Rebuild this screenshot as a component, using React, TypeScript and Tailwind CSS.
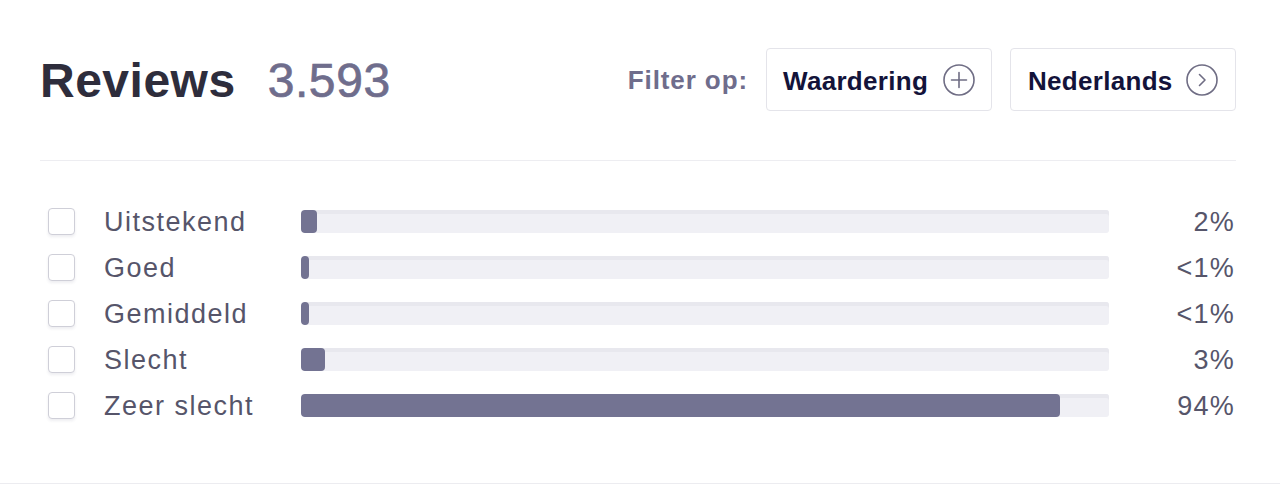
import React from "react";

const rows = [
  { label: "Uitstekend", pct: "2%", w: 16 },
  { label: "Goed", pct: "<1%", w: 8 },
  { label: "Gemiddeld", pct: "<1%", w: 8 },
  { label: "Slecht", pct: "3%", w: 24 },
  { label: "Zeer slecht", pct: "94%", w: 759 },
];

export default function App() {
  return (
    <div
      className="w-[1280px] h-[484px] bg-white border-b border-[#ececf0]"
      style={{ fontFamily: '"Liberation Sans", Arial, sans-serif' }}
    >
      <div className="pl-[40px] pr-[44px] pt-[48px]">
        <div className="flex items-center justify-between h-[63px]">
          <div className="flex items-center pt-[2px]">
            <span className="text-[48px] leading-[48px] font-bold text-[#2e2d3c] tracking-[0.5px]">
              Reviews
            </span>
            <span className="ml-[32px] text-[48px] leading-[48px] text-[#6f6d8c] tracking-[0.6px] [-webkit-text-stroke:0.7px_#6f6d8c]">
              3.593
            </span>
          </div>
          <div className="flex items-center">
            <span className="pt-[2px] text-[26px] font-bold text-[#6f6d8c] tracking-[0.9px] mr-[18px]">
              Filter op:
            </span>
            <button className="h-[63px] w-[226px] flex items-center pl-[16px] pr-[16px] border border-[#e4e4ea] rounded-[4px] bg-white">
              <span className="pt-[3px] text-[26px] font-bold text-[#13133a] tracking-[0.3px]">
                Waardering
              </span>
              <svg className="ml-auto" width="32" height="32" viewBox="0 0 32 32" fill="none">
                <circle cx="16" cy="16" r="15" stroke="#6f6d84" strokeWidth="1.6" />
                <path d="M16 8.5V23.5M8.5 16H23.5" stroke="#6f6d84" strokeWidth="1.6" strokeLinecap="round" />
              </svg>
            </button>
            <button className="ml-[18px] h-[63px] w-[226px] flex items-center pl-[17px] pr-[17px] border border-[#e4e4ea] rounded-[4px] bg-white">
              <span className="pt-[3px] text-[26px] font-bold text-[#13133a] tracking-[0.3px]">
                Nederlands
              </span>
              <svg className="ml-auto" width="32" height="32" viewBox="0 0 32 32" fill="none">
                <circle cx="16" cy="16" r="15" stroke="#6f6d84" strokeWidth="1.6" />
                <path d="M13.5 10.5L19 16L13.5 21.5" stroke="#6f6d84" strokeWidth="1.6" strokeLinecap="round" strokeLinejoin="round" />
              </svg>
            </button>
          </div>
        </div>
        <div className="mt-[49px] h-px bg-[#ededf1]" />
        <div className="pt-[37px]">
          {rows.map((r) => (
            <div key={r.label} className="flex items-center h-[46px]">
              <div className="ml-[8px] w-[27px] h-[27px] rounded-[4px] border-[1.5px] border-[#cfcfd8] bg-white shadow-[0_2px_3px_rgba(40,40,80,0.08)]" />
              <div className="ml-[29px] pt-[3px] w-[197px] text-[27px] leading-none text-[#56556a] tracking-[1.5px]">
                {r.label}
              </div>
              <div className="relative w-[808px] h-[23px] rounded-[3px] bg-[#f0f0f5] shadow-[inset_0_4px_0_#e8e8ee] overflow-hidden">
                <div
                  className="absolute left-0 top-0 h-full rounded-[4px] bg-[#737392]"
                  style={{ width: r.w }}
                />
              </div>
              <div className="flex-1 pt-[3px] text-right pr-[1px] text-[27px] leading-none text-[#56556a] tracking-[1.2px]">
                {r.pct}
              </div>
            </div>
          ))}
        </div>
      </div>
    </div>
  );
}
